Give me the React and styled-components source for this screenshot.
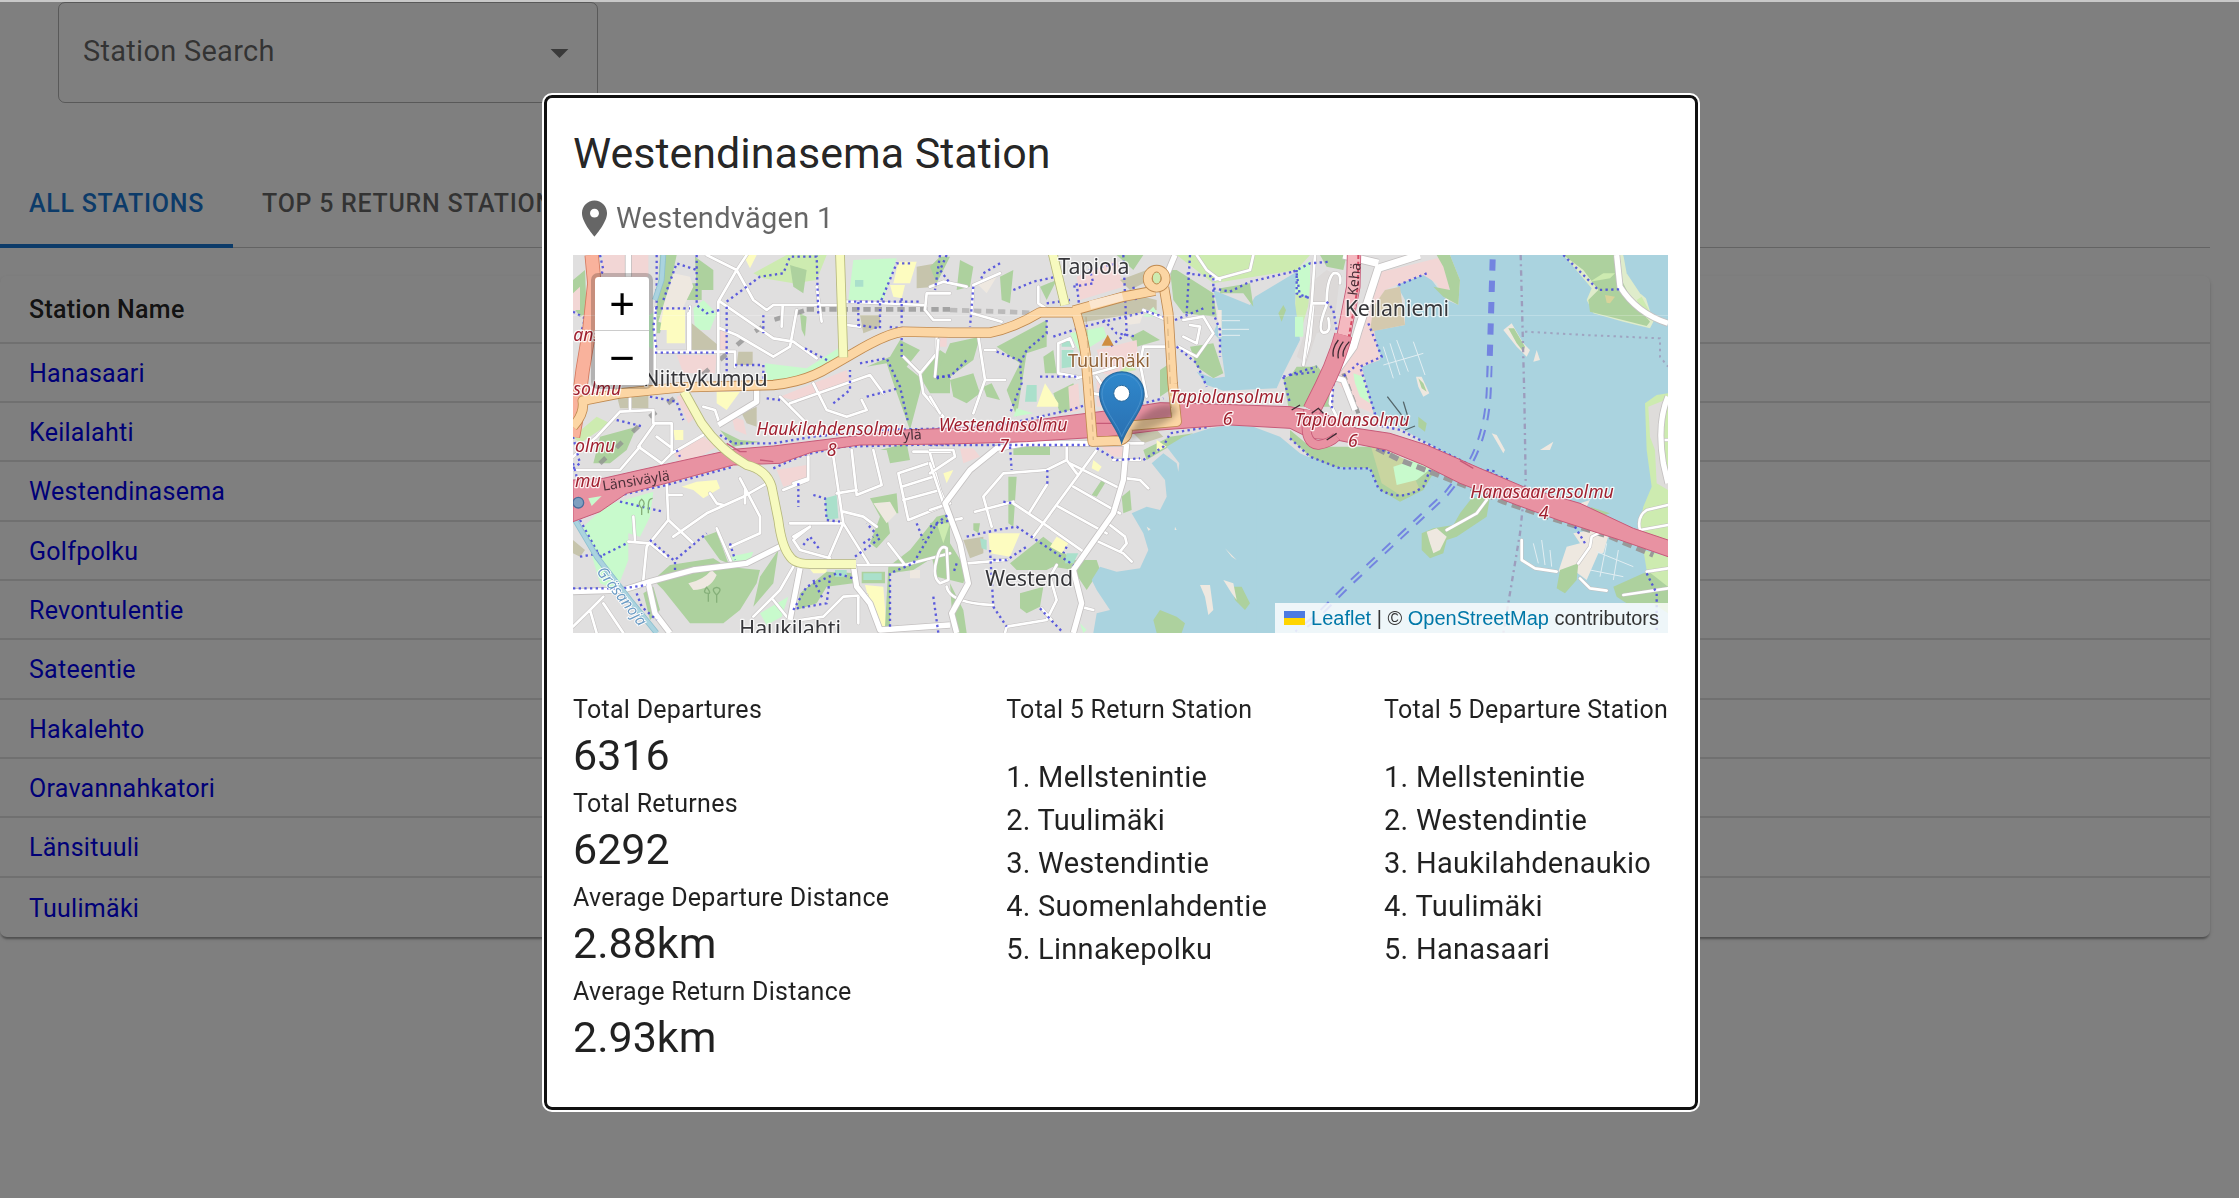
import React from "react";
import styled, { createGlobalStyle, css } from "styled-components";

const GlobalStyle = createGlobalStyle`
  * { box-sizing: border-box; }
  body {
    margin: 0;
    background: #fff;
    color: rgba(0, 0, 0, 0.87);
    font-family: Roboto, "Liberation Sans", sans-serif;
  }
`;

const stations = [
  "Hanasaari", "Keilalahti", "Westendinasema", "Golfpolku", "Revontulentie",
  "Sateentie", "Hakalehto", "Oravannahkatori", "Länsituuli", "Tuulimäki",
];

const stats = [
  ["Total Departures", "6316"],
  ["Total Returnes", "6292"],
  ["Average Departure Distance", "2.88km"],
  ["Average Return Distance", "2.93km"],
];

const returnStations = ["Mellstenintie", "Tuulimäki", "Westendintie", "Suomenlahdentie", "Linnakepolku"];
const departureStations = ["Mellstenintie", "Westendintie", "Haukilahdenaukio", "Tuulimäki", "Hanasaari"];

/* ---------- page ---------- */

const Page = styled.div`
  min-height: 100vh;
  border-top: 2px solid #c8c8c8;
`;

const Content = styled.main`
  padding-right: 29px;
`;

const SearchField = styled.div`
  display: grid;
  align-items: center;
  width: 540px;
  margin-left: 58px;
`;

const SearchSelect = styled.select`
  grid-area: 1 / 1;
  height: 101px;
  padding: 0 72px 2px 24px;
  border: 1px solid rgba(0, 0, 0, 0.3);
  border-radius: 7px;
  appearance: none;
  background: transparent;
  color: rgba(0, 0, 0, 0.6);
  font: 400 29px/43px Roboto, "Liberation Sans", sans-serif;
  letter-spacing: 0.00938em;
`;

const SelectArrow = styled.svg`
  grid-area: 1 / 1;
  justify-self: end;
  width: 43px;
  height: 43px;
  margin-right: 17px;
  fill: rgba(0, 0, 0, 0.54);
  pointer-events: none;
`;

const Tabs = styled.div`
  display: flex;
  margin-top: 59px;
  border-bottom: 1px solid rgba(0, 0, 0, 0.22);
`;

const Tab = styled.button`
  height: 86px;
  padding: 2px 29px 0;
  margin-bottom: -1px;
  border: 0;
  border-bottom: 4px solid ${(p) => (p.$active ? "#1976d2" : "transparent")};
  background: none;
  color: ${(p) => (p.$active ? "#1976d2" : "rgba(0, 0, 0, 0.6)")};
  font: 500 25px/32px Roboto, "Liberation Sans", sans-serif;
  letter-spacing: 0.02857em;
  text-transform: uppercase;
  white-space: nowrap;
`;

const Card = styled.section`
  margin-top: 28px;
  border-radius: 7px;
  overflow: hidden;
  box-shadow: 0 4px 2px -2px rgba(0, 0, 0, 0.2), 0 2px 2px rgba(0, 0, 0, 0.14), 0 2px 5px rgba(0, 0, 0, 0.12);
`;

const Table = styled.table`
  width: 100%;
  border-collapse: separate;
  border-spacing: 0;
  font-size: 25px;
  line-height: 36px;
  letter-spacing: 0.01071em;
`;

const cell = css`
  padding: 2px 29px 0;
  border-bottom: 2px solid #e0e0e0;
  text-align: left;
`;

const HeadCell = styled.th`
  ${cell}
  height: 68px;
  font-weight: 500;
`;

const Row = styled.tr`
  height: 59px;
  &:nth-child(3n) { height: 60px; }
  &:last-child td { border-bottom: 0; }
`;

const Cell = styled.td`
  ${cell}
`;

const StationLink = styled.a`
  color: #0000ee;
  text-decoration: none;
`;

/* ---------- modal ---------- */

const Backdrop = styled.div`
  position: fixed;
  inset: 2px 0 0;
  display: flex;
  align-items: center;
  justify-content: center;
  padding: 5px 0 0 3px;
  background: rgba(0, 0, 0, 0.5);
`;

const Dialog = styled.section`
  width: 1154px;
  max-width: 92%;
  padding: 26px 27px 41px 26px;
  border: 3px solid #101010;
  border-radius: 8px;
  outline: 2px solid #fff;
  background: #fff;
`;

const Title = styled.h2`
  margin: 0;
  font-size: 43px;
  font-weight: 400;
  line-height: 58px;
`;

const Address = styled.p`
  display: flex;
  align-items: center;
  margin: 15px 0;
  color: rgba(0, 0, 0, 0.6);
  font-size: 29px;
  line-height: 43px;
  letter-spacing: 0.00938em;
`;

const PinIcon = styled.svg`
  width: 43px;
  height: 43px;
  fill: currentColor;
`;

const Details = styled.div`
  display: flex;
  justify-content: space-between;
  margin-top: 57px;
`;

const StatList = styled.dl`
  margin: 0;
`;

const caption = css`
  padding-top: 2px;
  font-size: 25px;
  font-weight: 400;
  line-height: 36px;
  letter-spacing: 0.01071em;
`;

const Label = styled.dt`
  ${caption}
`;

const Value = styled.dd`
  margin: 0 0 2px;
  font-size: 43px;
  line-height: 54px;
`;

const RankTitle = styled.h3`
  ${caption}
  margin: 0;
`;

const RankList = styled.ol`
  margin: 28px 0 0;
  padding: 0;
  list-style: none;
  font-size: 29px;
  line-height: 43px;
  letter-spacing: 0.00938em;
`;

/* ---------- map ---------- */

const MapFrame = styled.div`
  position: relative;
  height: 378px;
  overflow: hidden;
  background: #ddd;
`;

const MapDrawing = styled.svg`
  display: block;
  width: 100%;
  height: 100%;
  font-family: "Noto Sans", "Open Sans", sans-serif;
`;

const ZoomControl = styled.div`
  position: absolute;
  top: 18px;
  left: 18px;
  border: 4px solid rgba(0, 0, 0, 0.2);
  border-radius: 7px;
  background-clip: padding-box;
`;

const ZoomButton = styled.button`
  display: block;
  width: 54px;
  height: 54px;
  padding: 0;
  border: 0;
  border-bottom: ${(p) => (p.$first ? "1px solid #ccc" : "0")};
  border-radius: ${(p) => (p.$first ? "4px 4px 0 0" : "0 0 4px 4px")};
  background: #fff;
  color: #000;
  font: 400 44px/50px "Liberation Sans", Arial, sans-serif;
`;

const Attribution = styled.div`
  position: absolute;
  right: 0;
  bottom: 0;
  padding: 0 9px;
  background: rgba(255, 255, 255, 0.8);
  color: #333;
  font: 400 20px/30px "Liberation Sans", Arial, sans-serif;
  white-space: nowrap;
`;

const MapLink = styled.a`
  color: #0078a8;
  text-decoration: none;
`;

const Flag = styled.svg`
  width: 21px;
  height: 14px;
  margin-right: 6px;
`;

const green = "#add19e";
const mint = "#c8facc";
const lime = "#cdebb0";
const teal = "#aae0cb";
const pink = "#f2d6d5";
const yellow = "#fdfcc0";
const sand = "#eee8e0";
const olive = "#c6c4ac";
const water = "#aad3df";

/* Areas of the western, middle and eastern thirds of the map. */
const westAreas = [
  [green, "M39 90L75 60L80 190L60 200L39 170Z M405 20L460 60V120L410 120Z M380 100H425V150H380Z M300 15L350 15L300 250L285 250Z"],
  [pink, "M130 15H265V80H120Z M39 130L60 110V180H39Z M350 315H470L465 370H370Z M475 240H500V300H478Z M660 440L860 360L870 400L700 450Z M340 610L430 560L470 590L370 650Z M650 660L740 645V690L670 710Z M350 440L375 430L410 500L385 520Z M515 500L550 510L560 555L525 540Z"],
  [lime, "M580 70L680 15H800L770 90L700 100L610 85Z M39 560L110 500L150 520L60 580Z"],
  [mint, "M880 30L1010 25L970 150H865Z M615 340L740 355L835 295L840 330L730 385L620 400Z M400 175L430 150L470 190L450 240H405Z M70 830L140 765L280 725L270 800L240 860L205 850V930L170 1020L120 1000Z M510 920L580 905L570 930L520 940Z M600 1090L685 1040L665 1100L620 1125Z M260 200L290 180L285 300L265 290Z"],
  [sand, "M340 70L390 80L400 110L340 230L295 215Z M1050 960H1080V985H1050Z"],
  [yellow, "M310 180H375V280H320V240H300Z M550 15H590L570 55Z M1015 35H1070L1050 100H1000Z M990 105H1035L1025 145L1000 140Z M470 425L540 425L500 480L470 460Z M365 710L410 695L470 690L480 715L430 745L400 720Z M915 1005L970 1010L980 1140H950Z M340 540H370V570H345Z M750 958H800V970H760Z"],
  [olive, "M390 215L480 290L475 300H390Z M535 305H578V345H530Z M1070 50L1130 40V110L1070 115Z M900 195H960V230L910 250Z M545 490L590 470V530L560 520Z M39 870L75 900L60 920L39 910Z M170 435H265V475H180Z"],
  [green, "M120 560L230 530L200 600L150 640H100Z M480 540L540 570L600 575L520 590Z M1020 270L1080 300L1040 350L1090 390L1050 540L1000 400L980 340L920 350L990 320Z M960 600L1040 580L1050 630L990 640L980 600Z M430 860L470 845L505 940L480 930Z M330 945L460 925L500 950L600 960L590 1000L540 1080L490 1120L390 1120L310 1020L280 990Z M600 980L655 900L640 1000L580 1070Z M720 1030L800 965L890 970L880 1000L800 1010L770 1060L710 1080Z M905 965L975 965V1000H905Z M930 745L1010 730L1015 790H980L990 850L950 895L930 880L960 800Z M1050 900L1130 800L1170 790V890L1060 960L990 970V1130H975L985 950Z M720 190L740 200L735 260L725 240Z M1080 380L1140 300L1170 320V430L1110 430Z M250 1030L280 1010L300 1080L270 1110Z M690 45L740 60L730 130L700 110Z"],
  [teal, "M795 745L830 735L835 805L800 810Z M885 90H910V110H885Z M910 970H965V990H910Z M825 960H860V980H825Z"],
  [sand, "M385 1000Q430 990 455 960L470 975Q450 1020 400 1020Z M940 760L990 755L1010 790L980 820Z"],
];

const midAreas = [
  [green, "M0 50L30 20H60L20 100Z M90 30L130 50L120 110L80 120Z M210 80L250 60L240 160L215 150Z M330 110L380 90L350 150Z M560 15H640L610 60Z M60 280L150 260L130 330L60 380L20 370Z M60 390L130 370L150 430L110 460L70 440Z M200 290L350 210L350 290L290 310L260 500L230 420L270 340Z M340 320L370 300L380 370H345Z M370 430L430 400L450 470L390 490Z M690 360L720 340V420L690 440Z M600 260L640 240L690 270L620 290Z M250 590H360V615H250Z M485 735L515 690L525 700L500 740Z M720 60L740 60L850 130L860 200L760 190L730 150Z M780 290L850 280L880 370L850 385L800 350Z M160 410L185 400L210 450L170 440Z M235 680L260 680L250 830L235 820Z M0 820L60 800V880L110 960L100 1000L20 980L0 900Z M240 940L340 860L430 930L500 930L510 960L470 1020L430 960L370 950L350 960L260 960Z M270 1030L340 1010L330 1070L290 1090L270 1075Z M575 740L600 720L605 780L580 790Z M640 600L720 560L790 550L700 600L650 630Z M130 820L150 820L145 850L130 840Z M60 1000L100 1080L110 1149H70Z"],
  [pink, "M440 80L560 30L580 110L450 150Z M500 300L620 270L625 340L560 380L520 370Z M90 595H130L150 620L100 640Z M500 580H580V620L550 620Z M415 410L445 400L450 480L420 490Z M500 380L540 400L520 470H500Z M30 265L50 260V290H30Z"],
  [olive, "M570 90L650 60L660 90L600 120Z M440 190L640 140L680 150L680 180L440 220Z M100 870L160 860V910L120 925Z M600 540L680 540L700 560L640 580Z"],
  [lime, "M740 15L850 100L1100 60L1140 15Z M1100 60L1140 50V150L1110 250L1095 180Z M20 820L60 820L40 880Z M560 370L600 340L620 360Z"],
  [yellow, "M320 470L345 400L385 460V470Z M175 850L270 850L240 920L180 910Z M490 630L515 650L505 665L485 655Z M360 890L380 860L415 880L395 910Z M40 670L70 660L50 700Z M680 570L710 590L680 605Z"],
  [teal, "M290 405H320V455H285Z M395 270H425V290H395Z M395 300H430V350L395 355Z M150 865L170 870V900L155 895Z M410 910H445L430 940H405Z"],
  [mint, "M420 250L520 230L530 260L450 310Z M260 475L310 490L250 500Z M640 200L670 170L690 200Z M470 1140L450 1120L460 1149Z"],
  [sand, "M580 205L640 190L630 220L590 225Z M140 100L200 80L170 130Z"],
];

const eastLand = [
  ["#dfeccb", "M820 15H1000L1020 50L1060 120L1090 215L1080 235L1000 215L910 190L890 150L905 115Z"],
  [green, "M820 15H990L980 60L1020 140L1080 215L1070 228L900 185L895 150L925 120L880 60Z"],
  [lime, "M900 95L940 70L975 70L960 85Z M1040 150L1055 140L1095 215L1070 205Z"],
  [water, "M1000 15H1134V200L1050 130L1010 70Z"],
  ["#d8d39a", "M945 135L975 140L960 160L950 158Z"],
  [lime, "M1065 460L1100 435L1134 430V870L1045 840L1060 770L1085 710L1070 600Z"],
  ["#dedcda", "M1075 470L1125 450L1105 530L1115 620L1134 680V720L1100 700L1095 600L1080 560Z"],
  [green, "M970 1010L1060 970L1134 950V1090L1090 1060L1010 1060L980 1040Z"],
  [lime, "M1060 900L1134 920V1010L1070 960Z"],
  [green, "M510 790L545 745L600 740L590 800L500 860L470 870L460 910L420 925L395 900L395 850L430 835L490 825Z"],
  [sand, "M410 845L440 835L470 860L450 900L430 910L420 880Z"],
  [sand, "M830 890L870 880L850 850L905 840H960L940 910H925L890 990L850 960L805 965Z M870 760L900 750L880 790L860 780Z"],
  [green, "M810 960L865 940L860 990L825 1030L800 1015Z M900 770L960 790L930 800Z"],
  [sand, "M640 240L665 220L700 280L720 300L710 320L680 290Z M378 380L395 380L418 430L400 440L385 410Z M605 550L620 555L645 600L640 610Z M750 600L790 575L780 600Z M740 300L750 330L730 335Z"],
  [green, "M655 235L672 235L705 290L700 305L680 280Z M385 500L410 520L405 545L385 530Z M385 385L400 400L410 425L395 415Z"],
];

const eastAreas = [
  [pink, "M255 65L300 60L480 15L490 60L470 150L440 100L400 75L320 105L285 120L260 160L250 230L270 330L215 350L250 490L200 470L130 380L190 290L220 200Z"],
  [green, "M440 15H480L510 90L505 165L460 140L430 110L480 120L460 50Z"],
  ["#d4c9ae", "M285 120L330 110L345 225L240 245L250 170Z"],
  [mint, "M190 370L220 380L240 460L210 440L195 400Z M20 60L60 30V150L15 130Z M15 200H40V260H15Z"],
  ["#dcd9d8", "M60 100L110 60L150 80L130 240L80 250L50 340L20 320L50 230Z"],
  [green, "M90 15L170 15L160 60L110 50Z M20 350L80 350L60 450L0 470V380Z"],
  [green, "M0 540L60 590L250 590L280 650L410 640L430 670L400 720L330 755L270 720L240 655L130 650L60 620L0 565Z"],
  ["#c9d5a0", "M240 580L350 630L390 720L330 735L275 700Z"],
  [mint, "M310 650L400 620L430 650L380 690L320 705Z"],
];

const thinRoads = [
  "M530 60L475 155V390 M530 60L440 15 M530 60L580 150L620 180L640 165H830 M530 60L560 15 M480 155L640 265L700 275L770 325 M480 235L530 255L640 320L690 290L710 180 M668 170L665 230 M770 110L785 215 M390 170V300 M285 175V370 M285 305H525V350 M385 190V300 M860 225L900 230 M860 155L1090 165",
  "M1170 130L1100 130L1095 180L1120 210L1170 210 M1130 260V310L1080 370L1030 320 M1080 370L1090 430L1150 500 M660 440L740 520 M690 460L930 375L970 430 M760 400L800 480L860 500L920 480L905 450 M590 430V460L480 525L465 480L430 470",
  "M180 485L280 480V520L335 520V610L305 640L235 590L285 520 M180 485L110 560L39 620 M335 610L430 555 M39 660H180L240 590 M210 440V480 M290 560L330 590",
  "M320 700L325 810L260 890L250 990 M325 810L400 880 M340 860L440 790L550 740L620 700 M540 685L600 800V850L510 890 M470 835L515 940 M555 720V760 M450 730L470 760L490 765 M205 875L270 880L320 920 M220 800L225 870 M325 735H365",
  "M745 620V690L670 720 M745 685L700 700 M820 620L850 820L805 925 M850 820L925 940 M850 820H690 M875 600L890 735L965 705L940 600 M890 720L830 730 M850 785L910 800L950 830 M985 880L1035 945L1170 910 M885 945L1035 945 M700 860L750 830L700 870L720 900L810 925",
  "M1060 605H1170 M1015 670L1105 640 M1015 670L1045 810L1170 760 M1025 710L1120 680 M1030 750L1140 720 M1110 610L1140 720 M1140 720L1170 790",
  "M39 1130L90 1080L130 1040 M90 1080L110 1149 M130 1060L190 1149 M250 990L265 1000 M640 1050L680 1100 M580 1100L660 1020L700 950 M720 1110L790 1100L850 1040L920 1035 M895 1040V1120",
];

const midRoads = [
  "M210 70L130 105L125 190L215 215 M0 110L40 95L110 110 M325 110V160L370 190 M145 260L165 390L130 490 M165 390H225 M165 300H195 M25 270L15 380 M0 440L30 490 M385 280L420 265L430 290 M385 280V370L440 380 M440 385L560 350 M640 290L630 340L650 440 M640 290L720 290 M745 290L800 320L850 250L820 200L760 210 M760 260L800 280L810 230L780 225",
  "M640 180L710 210 M850 90L960 60L970 15 M870 90L830 60L800 15 M1150 160L1140 270L1120 345",
  "M500 600L310 860 M420 640L570 715 M430 710L570 790 M385 770L530 850 M340 820L460 905 M250 760L340 820 M410 590V630L350 660L220 670L160 740L185 830 M410 630L440 670 M350 705L300 785 M135 785L250 755 M540 825L585 860L590 880L570 905 M505 875L580 910L605 935 M590 685L630 690L655 715 M550 630H630 M590 580H640",
  "M0 600H70L75 620L0 670 M0 640L40 760 M60 760L0 780 M70 810L95 805 M110 940L230 930 M380 945L360 980L380 1050L350 1110L230 1130L225 1149 M20 930Q30 880 50 895L55 990L30 1000Q5 980 20 930 M50 1010Q60 1060 190 1065 M450 1070L490 1080 M335 1075L365 1110 M500 380L520 410 M490 430L540 440",
];

const eastRoads = [
  "M75 15L65 160L40 345 M65 160H110Q110 90 130 70Q155 65 150 100 M110 165Q80 240 100 248Q125 250 115 205 M130 390L120 460L140 500 M590 750L560 790L470 840 M695 870V930L735 955L800 965 M870 985L900 1015L950 1022 M1134 765L1070 780Q1040 800 1050 840L1134 825 M1000 1035L1134 1015 M1134 570H1120 M1134 955L1070 965",
  "M600 670L640 695L650 700 M865 940L900 890L905 860L935 845",
];

const footways = [
  "M120 15L130 60L115 90 M290 15V170L280 230L290 300 M410 15V165L440 190L480 180 M285 175H390 M310 150L350 40L410 60 M500 170V370 M500 155L560 110L600 80L670 70L690 20L770 20L775 200 M285 308H470 M525 345H610V400 M735 295L810 335 M610 195V250 M620 445L660 450",
  "M865 155H1080 M895 155V225L960 235V160L1010 40L1060 40 M1025 145V320 M1030 235L980 230 M900 340L980 325L1020 410L1045 520 M920 440L1015 415 M820 460L870 420V360 M1130 385L1170 375 M270 440L350 455L370 510 M170 510L250 530 M480 555L520 580L640 580L760 560L950 540L1170 535",
  "M39 185L75 205L60 260 M39 560L60 640L39 655 M39 640L50 680 M39 780L80 790L160 740L320 705L520 650 M640 655L730 615L850 590L1170 582 M60 810L120 920L200 880 M60 920L120 910L130 950 M39 1015H190L260 1005 M345 960V930L440 850 M180 755L310 785 M715 700V770 M760 735L795 745L800 810L840 815 M730 885L750 860L780 900 M885 920L960 865L920 820 M990 1130V970L1060 940L1130 820L1170 790 M1070 820L1090 870",
  "M700 1080L740 1010L830 970L880 985 M710 1075L800 1060L810 980 M760 990L790 1050 M230 1030L245 1070L290 1110 M510 880L525 930 M270 870L340 930 M910 880L940 860",
  "M1160 15L1140 60L1170 100 M350 600L360 620",
];

const midFootways = [
  "M30 15L15 120 M210 40L160 70L150 95 M250 120L310 95L380 80 M130 110L120 230 M350 210V250L290 300L270 340L275 400L240 490 M200 305L280 335 M330 380L440 380 M370 260L460 230L650 185L700 200 M430 110L490 100L480 60L560 40 M580 15L590 250L540 290 M520 210L560 250L620 260 M610 110L620 160 M350 160L420 150 M440 100L450 190 M20 380L60 380L110 330",
  "M780 15L770 190 M770 70L850 80V190L870 240V320 M735 210L820 175 M850 115L900 125L960 95L1090 65 M1100 70L1110 140H1140 M740 290L800 340L830 410 M1060 380L1160 350 M1060 380L1080 460",
  "M0 540L240 520L420 480L500 455 M600 470L700 445 M0 585L480 585 M240 590L245 660 M352 660V705 M110 860L200 840L260 830L430 945 M180 900L190 1070L230 1130 M190 930H230L290 890 M0 830L60 810 M80 940L70 970 M10 1040L25 1149 M500 595L560 630L630 625 M640 630L700 590L720 550L840 530 M410 890L400 910 M330 1075L400 1149 M220 755L250 760",
];

const eastFootways = [
  "M10 65L60 40L120 35 M20 60V130L60 145 M110 155L130 180L140 240 M235 220L275 320L210 350L255 490L240 520 M205 340L160 380 M0 375L80 365 M130 400L125 480 M325 105L410 70 M0 565L60 620L150 655L240 655L265 715Q330 760 400 710L420 660 M240 520L330 540L400 575L560 655L660 690 M230 580L300 610 M820 15L925 120L990 118 M590 660L620 665 M855 830L885 880 M680 760L860 820 M1070 970L1100 1030V1149",
];

const Roads = ({ d }) => (
  <g fill="none" strokeLinejoin="round" strokeLinecap="round">
    <g stroke="#c4c1c1" strokeWidth="11">{d.map((p) => <path key={p} d={p} />)}</g>
    <g stroke="#fff" strokeWidth="8">{d.map((p) => <path key={p} d={p} />)}</g>
  </g>
);

const Footways = ({ d }) => (
  <g fill="none" stroke="#4444dc" strokeWidth="7" strokeDasharray="7 10" opacity="0.85">
    {d.map((p) => <path key={p} d={p} />)}
  </g>
);

const Areas = ({ items }) => items.map(([fill, d], i) => <path key={i} fill={fill} d={d} />);

const CasedRoad = ({ d, casing, fill, width }) => (
  <g fill="none" strokeLinejoin="round">
    <path d={d} stroke={casing} strokeWidth={width + 5} />
    <path d={d} stroke={fill} strokeWidth={width} />
  </g>
);

const placeNames = [
  ["Niittykumpu", 250, 407], ["Haukilahti", 538, 1158], ["Tapiola", 1495, 71],
  ["Westend", 1276, 1007], ["Keilaniemi", 2354, 197],
];

const junctions = [
  ["Haukilahdensolmu", 589, 556], ["8", 800, 618], ["Westendinsolmu", 1136, 542], ["7", 1318, 605],
  ["Tapiolansolmu", 1828, 460], ["6", 1988, 526], ["Tapiolansolmu", 2204, 528], ["6", 2364, 590],
  ["Hanasaarensolmu", 2731, 744], ["4", 2936, 808],
  ["solmu", 40, 434], ["olmu", 45, 606], ["mu", 45, 712], ["ans", 40, 272],
];

function StationMap() {
  return (
    <MapDrawing viewBox="39 15 3285 1134" preserveAspectRatio="xMidYMid slice" role="img" aria-label="Map of Westend">
      <defs>
        <linearGradient id="marker" x1="0" y1="0" x2="0" y2="1">
          <stop offset="0" stopColor="#2f88cc" />
          <stop offset="1" stopColor="#2a6fb0" />
        </linearGradient>
        <filter id="soft" x="-30%" y="-30%" width="160%" height="160%">
          <feGaussianBlur stdDeviation="9" />
        </filter>
      </defs>

      <rect x="39" y="15" width="3285" height="1134" fill="#e0dfdf" />
      <Areas items={westAreas} />
      <g transform="translate(1110 0)">
        <Areas items={midAreas} />
        <path fill={water} d="M850 120L960 165L975 140L1100 65L1095 160L1110 270L1060 370L1040 415L880 422L830 405L800 365L850 385L885 380L870 270L850 250L870 200Z" />
        <path fill={green} d="M1045 190L1060 165L1068 180L1055 215Z M870 115L960 100L970 170L940 130L870 130Z M1060 385L1160 345L1200 400V470H1075Z" />
        <path fill={water} d="M490 1149L500 1090L540 1080L500 1020L485 990L510 950L560 965L630 955L655 900L640 850L605 790L650 770L690 780L710 740L705 690L665 640L700 610L740 640L745 665L748 640L710 590L760 560L840 535L900 525L970 530L1050 560L1110 610L1200 650L2220 700V1149Z" />
        <path fill={green} d="M670 1110L690 1080L740 1100L765 1120L755 1149H680Z M905 1010L935 1010L960 1060L945 1080L915 1050Z" />
        <path fill={sand} d="M810 1005L840 1005L850 1080L835 1095L825 1040Z M880 990L910 1000L920 1050L905 1030Z M1070 955L1088 985L1075 975Z M885 895L920 930L905 920Z M650 830L662 838L655 842Z M735 830L740 840H734Z" />
        <path fill={sand} d="M862 180L875 180V262L865 262Z" />
        <path fill="none" stroke="#e4eef0" strokeWidth="3" d="M876 212H930 M876 238H957 M876 256H930" />
      </g>
      <g transform="translate(2190 0)">
        <path fill={water} d="M320 105L410 70L470 150L505 165L510 90L480 15H1134V1149H-100V620L60 620L240 655L400 720L560 660L250 490L215 350L275 320L235 245L345 225L345 150Z" />
        <Areas items={eastAreas} />
        <Areas items={eastLand} />
        <path fill="none" stroke="#e2eef2" strokeWidth="3" d="M280 345L400 310 M280 290L310 385 M300 280L330 375 M320 270L355 365 M370 275L405 375 M730 880L745 940 M755 870L765 945 M780 900L785 950 M920 905L1030 950 M900 960L1000 980 M950 880L930 980 M985 900L970 990" />
        <path fill="none" stroke="#55666a" strokeWidth="4" d="M292 440L350 515 M340 455L355 505 M345 540L375 528" />
        <path fill="none" stroke="#6a76e0" strokeWidth="18" strokeDasharray="34 30" opacity="0.85" d="M608 28L597 400Q595 540 540 640L470 730L330 860L180 1000L80 1100L20 1149" />
        <path fill="none" stroke={water} strokeWidth="6" d="M600 330L597 400Q595 540 540 640L470 730L330 860L180 1000L80 1100L20 1149" />
        <path fill="none" stroke="#9a90b4" strokeWidth="7" strokeDasharray="16 12 6 12" opacity="0.8" d="M692 15L703 440L707 690L690 850L640 1149" />
        <path fill="none" stroke="#9a90b4" strokeWidth="6" strokeDasharray="7 12" opacity="0.7" d="M705 245L885 255L1110 265V320L1134 350" />
        <path fill="none" stroke="#999" strokeWidth="16" strokeDasharray="28 16" d="M260 595L330 630L520 705L640 755L800 810L960 860L1090 915" />
        <path fill="none" stroke="#999" strokeWidth="12" strokeDasharray="22 14" d="M160 370L205 490" />
      </g>

      <g fill="none" stroke="#8f8f8f" strokeWidth="14">
        <path strokeDasharray="24 44" opacity="0.75" d="M120 640L250 515L330 455L450 355L560 260L640 210L740 180" />
        <path strokeDasharray="22 12" opacity="0.75" d="M740 178H1170" />
        <path strokeDasharray="22 14" opacity="0.45" d="M1170 180L1330 185L1450 190" />
      </g>

      <Roads d={thinRoads} />
      <g transform="translate(1110 0)"><Roads d={midRoads} /></g>
      <g transform="translate(2190 0)"><Roads d={eastRoads} /></g>

      <CasedRoad casing="#c4c1c1" fill="#fff" width={16} d="M39 1025L190 1020L270 995L400 960L560 940L660 890 M265 1000L285 1090L330 1149 M205 15V80 M720 955L690 1110 M880 945L890 1010L930 1060L960 1140L1170 1125 M590 420V455L475 525" />
      <CasedRoad casing="#c4c1c1" fill="#fff" width={16} d="M1190 1149L1175 1090L1225 1000L1200 880L1155 760L1230 660L1310 595L1400 580H1700 M1700 580L1690 690L1660 790L1540 960L1565 1060L1540 1149 M1820 75L1845 15 M3324 440Q3290 520 3310 640L3324 700 M3170 15L3180 110Q3230 190 3324 220 M2310 380L2350 390L2385 480" />
      <CasedRoad casing="#c4c1c1" fill="#fff" width={22} d="M2580 15L2455 55L2395 240L2380 290L2320 375 M2350 15L2455 40" />

      <Footways d={footways} />
      <g transform="translate(1110 0)"><Footways d={midFootways} /></g>
      <g transform="translate(2190 0)"><Footways d={eastFootways} /></g>

      <CasedRoad casing="#8fc0d0" fill={water} width={12} d="M310 15L305 90L285 150 M39 800L110 920L210 1050L290 1149" />
      <CasedRoad casing="#d4795f" fill="#f9b29c" width={38} d="M95 15L103 100L88 240L68 360L50 500L39 560" />
      <path fill="#e892a2" stroke="#c75a78" strokeWidth="3" d="M39 690L130 685L240 660L520 598L640 588L850 562L1030 540L1170 535L1310 528L1500 500L1660 480L1800 458L1960 462L2190 470L2290 490L2390 535L2490 550L2600 585L2760 655L2890 710L3060 760L3220 835L3330 872V922L3180 870L3000 812L2870 765L2700 700L2590 645L2480 600L2340 572L2250 565L2190 535L2010 525L1800 540L1640 560L1400 575L1170 582L900 585L760 605L660 640L520 645L330 697L200 730L120 785L39 815Z" />
      <path fill={mint} d="M85 745L125 738L95 768Z" />
      <circle cx="55" cy="758" r="16" fill="#7e9fc0" stroke="#4a6f9c" strokeWidth="4" />
      <CasedRoad casing="#c75a78" fill="#f4b9c0" width={38} d="M2382 15L2380 110L2350 262" />
      <path d="M2395 15L2394 110L2366 262" fill="none" stroke="#d64c64" strokeWidth="6" strokeDasharray="12 8" />
      <CasedRoad casing="#c75a78" fill="#e892a2" width={50} d="M2350 255Q2330 330 2290 410L2255 480" />
      <CasedRoad casing="#c75a78" fill="#e892a2" width={24} d="M2245 480Q2225 580 2275 585Q2310 580 2330 560" />
      <path d="M2320 320Q2315 295 2335 270 M2335 325Q2330 300 2350 275 M2350 320Q2345 300 2368 275 M2195 480L2220 465 M2255 490L2275 475L2290 490 M2300 570L2330 550" fill="none" stroke="#3d2a33" strokeWidth="4" />
      <path d="M500 580L540 605H560 M600 630L640 635 M1590 520H1660 M2700 632L2740 655" fill="none" stroke="#c75a78" strokeWidth="4" />

      <CasedRoad casing="#c08a50" fill="#fcd6a4" width={26} d="M39 530Q75 490 68 452L180 430L360 412L640 405Q740 395 810 350L880 310Q980 250 1030 245L1170 248L1290 248Q1360 235 1440 187L1548 187Q1575 280 1578 330L1590 480L1598 575L1680 572Q1710 560 1700 528L1850 515L1838 400L1825 190L1812 112 M1540 182L1690 140L1785 122" />
      <path d="M1590 165L1688 140" stroke="#fbe6cf" strokeWidth="24" />
      <circle cx="1790" cy="86" r="27" fill="none" stroke="#c08a50" strokeWidth="29" />
      <circle cx="1790" cy="86" r="27" fill="none" stroke="#fcd6a4" strokeWidth="24" />
      <ellipse cx="1790" cy="84" rx="13" ry="18" fill={lime} stroke="#c08a50" strokeWidth="3" />
      <path d="M1578 200L1600 570 M1822 200L1835 500" fill="none" stroke="#a98a5c" strokeWidth="4" strokeDasharray="22 14" opacity="0.35" />
      <CasedRoad casing="#b6b87c" fill="#f7fabf" width={24} d="M840 10L850 322 M372 425L425 520Q480 600 560 645Q620 660 635 710L655 810Q665 890 690 920Q705 942 750 942H888 M1478 10L1515 165" />
      <path d="M39 196H3324" stroke="#fff" strokeWidth="2" opacity="0.4" />

      <path fill="#cf8d40" d="M1625 287L1643 254L1661 287Z" />
      <g fill="none" stroke="#86b07a" strokeWidth="4">
        <path d="M445 1055V1030Q425 1030 440 1012Q455 1030 445 1030M470 1058V1035Q450 1015 470 1012Q490 1015 470 1035M245 795V775Q230 760 245 748Q260 760 245 775M265 790V765Q265 745 278 745" />
      </g>

      <g fill="#8f6238" stroke="#fff" strokeOpacity="0.75" strokeWidth="7" paintOrder="stroke" strokeLinejoin="round">
        <text x="1524" y="350" fontSize="54">Tuulimäki</text>
      </g>
      <g fill="#36363a" stroke="#fff" strokeOpacity="0.75" strokeWidth="8" paintOrder="stroke" strokeLinejoin="round" fontSize="64">
        {placeNames.map(([name, x, y]) => <text key={name} x={x} y={y}>{name}</text>)}
      </g>
      <g fill="#a0202f" stroke="#fff" strokeOpacity="0.85" strokeWidth="8" paintOrder="stroke" strokeLinejoin="round" fontSize="53" fontStyle="italic">
        {junctions.map(([name, x, y]) => <text key={name + x} x={x} y={y}>{name}</text>)}
      </g>
      <g fill="#4a2f38" fontSize="42">
        <text transform="translate(130 722) rotate(-9)">Länsiväylä</text>
        <text transform="translate(1030 570) rotate(-3)">ylä</text>
        <text transform="translate(2392 138) rotate(-84)">Kehä</text>
      </g>
      <text transform="translate(108 965) rotate(52)" fontSize="46" fontStyle="italic" fill="#6c9cc4" stroke="#fff" strokeWidth="5" paintOrder="stroke">Gräsanoja</text>

      <path d="M1690 575L1740 500Q1800 450 1850 470Q1860 500 1790 530Z" fill="#000" opacity="0.25" filter="url(#soft)" />
      <path d="M1685 578C1672 530 1619 480 1619 432A66 66 0 0 1 1752 432C1752 480 1699 530 1685 578Z" fill="url(#marker)" stroke="#2a6a9e" strokeWidth="4" />
      <path d="M1685 560C1672 520 1626 475 1626 432A59 59 0 0 1 1745 432C1745 475 1699 520 1685 560Z" fill="none" stroke="#5a9fd4" strokeWidth="3" opacity="0.6" />
      <circle cx="1685" cy="430" r="24" fill="#fff" stroke="#2a6a9e" strokeWidth="3" />
    </MapDrawing>
  );
}

const RankColumn = ({ title, names }) => (
  <div>
    <RankTitle>{title}</RankTitle>
    <RankList>
      {names.map((name, i) => <li key={name}>{i + 1}. {name}</li>)}
    </RankList>
  </div>
);

export default function App() {
  return (
    <>
      <GlobalStyle />
      <Page>
        <Content>
          <SearchField>
            <SearchSelect aria-label="Station Search" defaultValue="">
              <option value="">Station Search</option>
            </SearchSelect>
            <SelectArrow viewBox="0 0 24 24" aria-hidden="true"><path d="M7 10l5 5 5-5z" /></SelectArrow>
          </SearchField>
          <Tabs role="tablist">
            <Tab role="tab" aria-selected="true" $active>All Stations</Tab>
            <Tab role="tab" aria-selected="false">Top 5 Return Stations</Tab>
          </Tabs>
          <Card>
            <Table>
              <thead>
                <tr><HeadCell scope="col">Station Name</HeadCell></tr>
              </thead>
              <tbody>
                {stations.map((name) => (
                  <Row key={name}>
                    <Cell><StationLink href={`#${name}`}>{name}</StationLink></Cell>
                  </Row>
                ))}
              </tbody>
            </Table>
          </Card>
        </Content>
      </Page>

      <Backdrop>
        <Dialog role="dialog" aria-modal="true" aria-labelledby="station-title">
          <Title id="station-title">Westendinasema Station</Title>
          <Address>
            <PinIcon viewBox="0 0 24 24" aria-hidden="true">
              <path d="M12 2C8.13 2 5 5.13 5 9c0 5.25 7 13 7 13s7-7.75 7-13c0-3.87-3.13-7-7-7zm0 9.5c-1.38 0-2.5-1.12-2.5-2.5s1.12-2.5 2.5-2.5 2.5 1.12 2.5 2.5-1.12 2.5-2.5 2.5z" />
            </PinIcon>
            Westendvägen 1
          </Address>
          <MapFrame>
            <StationMap />
            <ZoomControl>
              <ZoomButton $first aria-label="Zoom in">+</ZoomButton>
              <ZoomButton aria-label="Zoom out">−</ZoomButton>
            </ZoomControl>
            <Attribution>
              <MapLink href="#leaflet">
                <Flag viewBox="0 0 12 8" preserveAspectRatio="none" aria-hidden="true">
                  <path fill="#4C7BE1" d="M0 0h12v4H0z" />
                  <path fill="#FFD500" d="M0 4h12v4H0z" />
                </Flag>
                Leaflet
              </MapLink>{" "}
              | © <MapLink href="#openstreetmap">OpenStreetMap</MapLink> contributors
            </Attribution>
          </MapFrame>
          <Details>
            <StatList>
              {stats.map(([label, value]) => (
                <React.Fragment key={label}>
                  <Label>{label}</Label>
                  <Value>{value}</Value>
                </React.Fragment>
              ))}
            </StatList>
            <RankColumn title="Total 5 Return Station" names={returnStations} />
            <RankColumn title="Total 5 Departure Station" names={departureStations} />
          </Details>
        </Dialog>
      </Backdrop>
    </>
  );
}
